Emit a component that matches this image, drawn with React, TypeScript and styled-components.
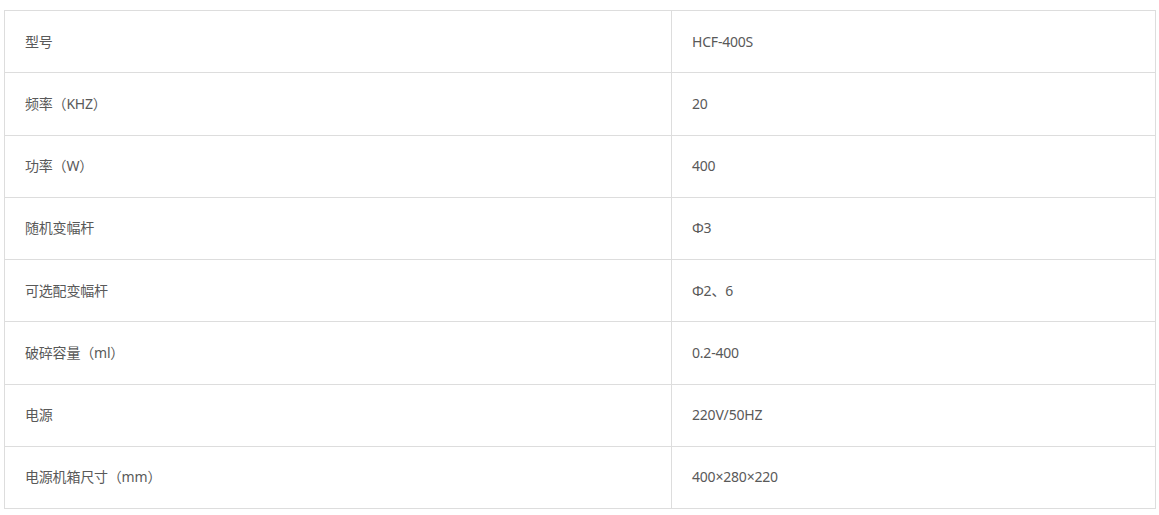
import React from "react";
import styled, { createGlobalStyle } from "styled-components";

const GlobalStyle = createGlobalStyle`
  html, body {
    margin: 0;
    padding: 0;
    background: #ffffff;
  }
  body {
    font-family: "Noto Sans", "Noto Sans CJK SC", sans-serif;
  }
`;

const Page = styled.div`
  padding: 10px 4px 0 4px;
`;

const Table = styled.table`
  width: 1152px;
  border-collapse: collapse;
  table-layout: fixed;
  border: 1px solid #dddddd;
`;

const Row = styled.tr`
  height: 62.25px;
`;

const Cell = styled.td<{ $first?: boolean }>`
  width: ${(p) => (p.$first ? "667px" : "auto")};
  border: 1px solid #dddddd;
  padding: 0 20px;
  font-size: 14px;
  line-height: 20px;
  color: #595959;
  vertical-align: middle;
  box-sizing: border-box;
  letter-spacing: -0.2px;
`;

const rows: [string, string][] = [
  ["型号", "HCF-400S"],
  ["频率（KHZ）", "20"],
  ["功率（W）", "400"],
  ["随机变幅杆", "Φ3"],
  ["可选配变幅杆", "Φ2、6"],
  ["破碎容量（ml）", "0.2-400"],
  ["电源", "220V/50HZ"],
  ["电源机箱尺寸（mm）", "400×280×220"],
];

export default function App() {
  return (
    <>
      <GlobalStyle />
      <Page>
        <Table>
          <tbody>
            {rows.map(([k, v]) => (
              <Row key={k}>
                <Cell $first>{k}</Cell>
                <Cell>{v}</Cell>
              </Row>
            ))}
          </tbody>
        </Table>
      </Page>
    </>
  );
}
